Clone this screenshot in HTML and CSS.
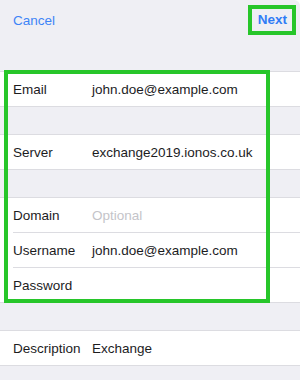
FILE: index.html
```html
<!DOCTYPE html>
<html lang="en">

<head>
  <meta charset="UTF-8" />
  <meta name="viewport" content="width=device-width, initial-scale=1.0" />
  <title>Exchange</title>
  <link rel="stylesheet" href="styles.css">
</head>

<body>
  <div class="screen">
    <div class="nav">
      <span class="cancel">Cancel</span>
      <span class="next">Next</span>
    </div>

    <div class="groups">
      <div class="group">
        <div class="row"><span class="label">Email</span><span class="value">john.doe@example.com</span></div>
      </div>

      <div class="group">
        <div class="row"><span class="label">Server</span><span class="value">exchange2019.ionos.co.uk</span></div>
      </div>

      <div class="group">
        <div class="row"><span class="label">Domain</span><span class="value placeholder">Optional</span></div>
        <div class="row"><span class="label">Username</span><span class="value">john.doe@example.com</span></div>
        <div class="row"><span class="label">Password</span><span class="value"></span></div>
      </div>

      <div class="group">
        <div class="row"><span class="label">Description</span><span class="value">Exchange</span></div>
      </div>
    </div>

    <!-- highlight frame drawn over the form -->
    <div class="highlight"></div>
  </div>
</body>

</html>
```

FILE: styles.css
```css
html {
  background: #fff;
}

body {
  margin: 0;
  font-family: "Liberation Sans", Arial, sans-serif;
  font-size: 13.5px;
  color: #1c1c1e;
}

.screen {
  position: relative;
  width: 300px;
  height: 380px;
  overflow: hidden;
  background: #efeff4;
  border-top-right-radius: 6px;
}

.nav {
  height: 40px;
  display: flex;
  justify-content: space-between;
  align-items: center;
  padding: 0 4px 0 13px;
  margin-bottom: 31px;
}

.cancel {
  color: #3d84f7;
}

.next {
  color: #2f7cf6;
  font-weight: bold;
  border: 4px solid #27c62a;
  height: 22px;
  line-height: 22px;
  padding: 0 5px 0 6px;
}

.groups {
  display: flex;
  flex-direction: column;
  gap: 27px;
}

.group {
  background: #fff;
  border-top: 1px solid #dcdce1;
  border-bottom: 1px solid #dcdce1;
}

.row {
  height: 34px;
  display: flex;
  align-items: center;
  padding-left: 13px;
  position: relative;
}

.row + .row::before {
  content: "";
  position: absolute;
  top: -1px;
  left: 13px;
  right: 0;
  border-top: 1px solid #dcdce1;
}

.row + .row {
  margin-top: 1px;
}

.label {
  width: 79px;
  flex-shrink: 0;
}

.placeholder {
  color: #c4c4c9;
}

.highlight {
  position: absolute;
  top: 70px;
  left: 4px;
  width: 266px;
  height: 233px;
  box-sizing: border-box;
  border: 4px solid #27c62a;
  pointer-events: none;
}
```
